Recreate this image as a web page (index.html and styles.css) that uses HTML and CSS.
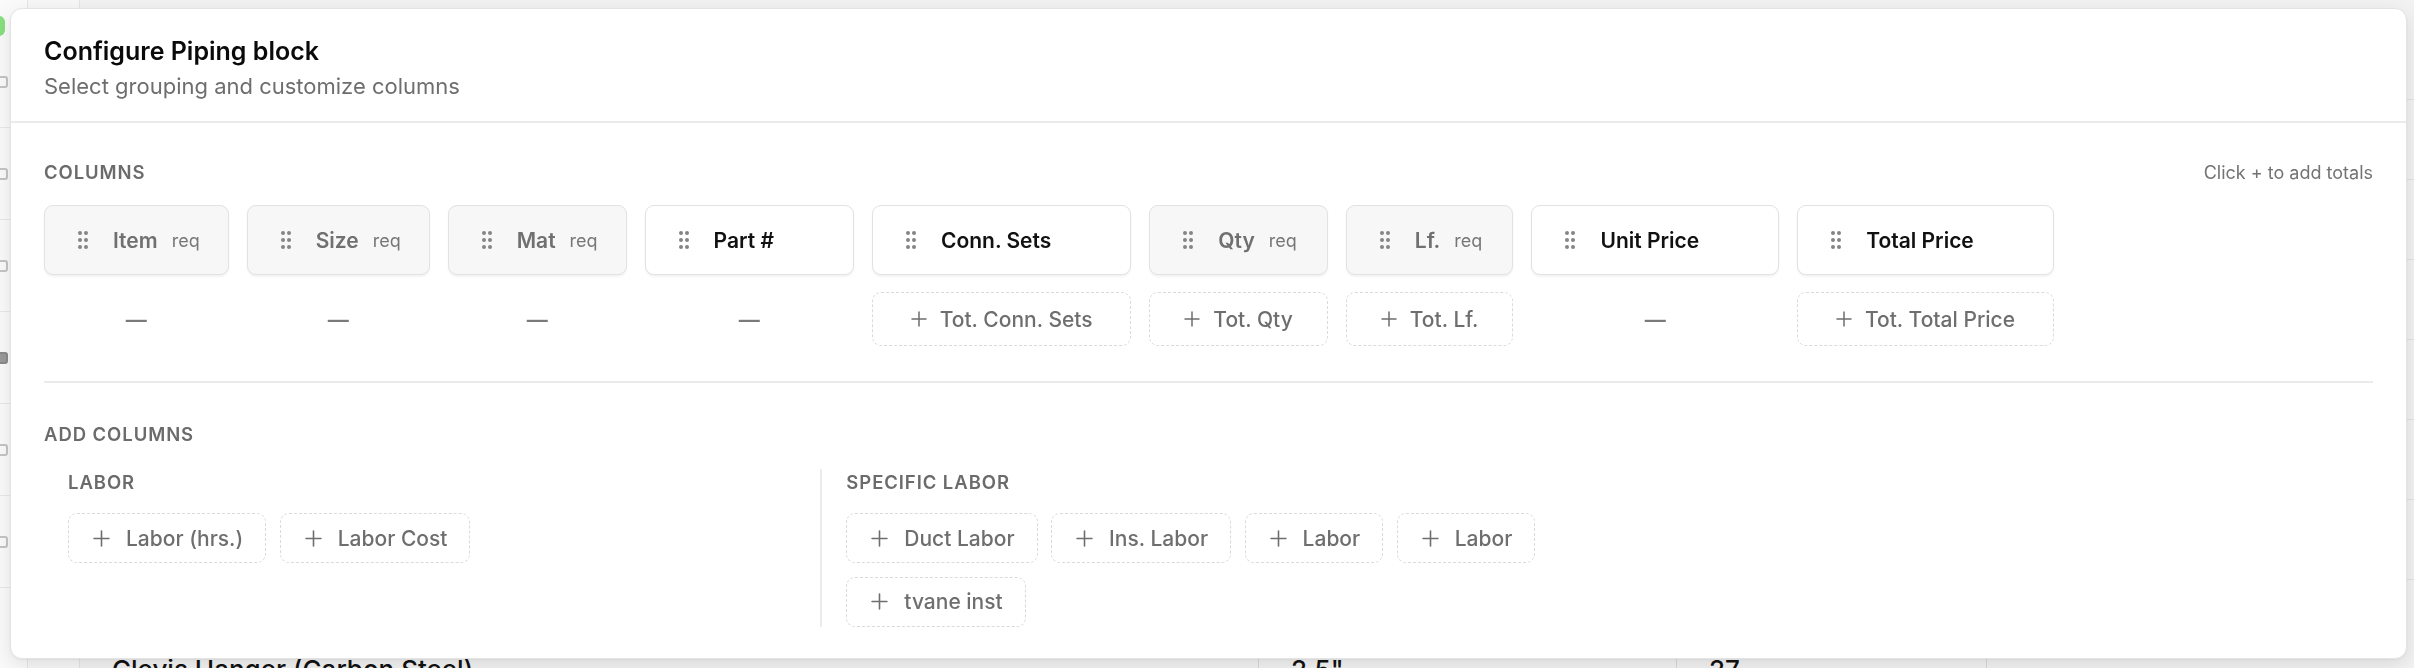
FILE: index.html
```html
<!DOCTYPE html>
<html lang="en">
  <head>
    <meta charset="UTF-8" />
    <meta name="viewport" content="width=device-width, initial-scale=1.0" />
    <title>Configure Piping block</title>
    <link rel="stylesheet" href="styles.css">
  </head>

  <body>
    <svg width="0" height="0" style="position: absolute">
      <symbol id="grip" viewBox="0 0 10 20">
        <circle cx="2" cy="3" r="2" />
        <circle cx="8" cy="3" r="2" />
        <circle cx="2" cy="10" r="2" />
        <circle cx="8" cy="10" r="2" />
        <circle cx="2" cy="17" r="2" />
        <circle cx="8" cy="17" r="2" />
      </symbol>
      <symbol id="plus" viewBox="0 0 16 16">
        <path d="M8 1v14M1 8h14" fill="none" stroke="currentColor" stroke-width="1.5" stroke-linecap="round" />
      </symbol>
    </svg>

    <!-- estimate sheet behind the dialog -->
    <div class="app">
      <aside class="rail">
        <span class="rail-status"></span>
        <div class="rail-item"><span class="rail-icon"></span></div>
        <div class="rail-item"><span class="rail-icon"></span></div>
        <div class="rail-item"><span class="rail-icon"></span></div>
        <div class="rail-item"><span class="rail-icon is-dark"></span></div>
        <div class="rail-item"><span class="rail-icon"></span></div>
        <div class="rail-item"><span class="rail-icon"></span></div>
      </aside>
      <div class="nav"></div>
      <main class="sheet">
        <div class="sheet-row"></div>
        <div class="sheet-row"></div>
        <div class="sheet-row"></div>
        <div class="sheet-row"></div>
        <div class="sheet-row"></div>
        <div class="sheet-row"></div>
        <div class="sheet-row"></div>
        <div class="sheet-row sheet-row-item">
          <span class="cell cell-name">Clevis Hanger (Carbon Steel)</span>
          <span class="cell cell-size">2.5"</span>
          <span class="cell cell-qty">27</span>
          <span class="cell"></span>
        </div>
      </main>
    </div>

    <div class="dialog">
      <header class="dialog-header">
        <h2 class="dialog-title">Configure Piping block</h2>
        <p class="dialog-subtitle">Select grouping and customize columns</p>
      </header>

      <div class="dialog-body">
        <section class="columns">
          <div class="section-head">
            <h3 class="section-label">Columns</h3>
            <span class="section-hint">Click + to add totals</span>
          </div>

          <div class="column-list">
            <div class="column">
              <div class="column-chip is-required">
                <svg class="grip"><use href="#grip" /></svg>
                <span class="column-name">Item</span>
                <span class="column-req">req</span>
              </div>
              <div class="column-total is-empty">&mdash;</div>
            </div>

            <div class="column">
              <div class="column-chip is-required">
                <svg class="grip"><use href="#grip" /></svg>
                <span class="column-name">Size</span>
                <span class="column-req">req</span>
              </div>
              <div class="column-total is-empty">&mdash;</div>
            </div>

            <div class="column">
              <div class="column-chip is-required">
                <svg class="grip"><use href="#grip" /></svg>
                <span class="column-name">Mat</span>
                <span class="column-req">req</span>
              </div>
              <div class="column-total is-empty">&mdash;</div>
            </div>

            <div class="column">
              <div class="column-chip">
                <svg class="grip"><use href="#grip" /></svg>
                <span class="column-name">Part #</span>
                <button class="column-remove" aria-label="Remove column">&times;</button>
              </div>
              <div class="column-total is-empty">&mdash;</div>
            </div>

            <div class="column">
              <div class="column-chip">
                <svg class="grip"><use href="#grip" /></svg>
                <span class="column-name">Conn. Sets</span>
                <button class="column-remove" aria-label="Remove column">&times;</button>
              </div>
              <button class="column-total">
                <svg class="plus"><use href="#plus" /></svg>
                Tot. Conn. Sets
              </button>
            </div>

            <div class="column">
              <div class="column-chip is-required">
                <svg class="grip"><use href="#grip" /></svg>
                <span class="column-name">Qty</span>
                <span class="column-req">req</span>
              </div>
              <button class="column-total">
                <svg class="plus"><use href="#plus" /></svg>
                Tot. Qty
              </button>
            </div>

            <div class="column">
              <div class="column-chip is-required">
                <svg class="grip"><use href="#grip" /></svg>
                <span class="column-name">Lf.</span>
                <span class="column-req">req</span>
              </div>
              <button class="column-total">
                <svg class="plus"><use href="#plus" /></svg>
                Tot. Lf.
              </button>
            </div>

            <div class="column">
              <div class="column-chip">
                <svg class="grip"><use href="#grip" /></svg>
                <span class="column-name">Unit Price</span>
                <button class="column-remove" aria-label="Remove column">&times;</button>
              </div>
              <div class="column-total is-empty">&mdash;</div>
            </div>

            <div class="column">
              <div class="column-chip">
                <svg class="grip"><use href="#grip" /></svg>
                <span class="column-name">Total Price</span>
                <button class="column-remove" aria-label="Remove column">&times;</button>
              </div>
              <button class="column-total">
                <svg class="plus"><use href="#plus" /></svg>
                Tot. Total Price
              </button>
            </div>
          </div>
        </section>

        <section class="add-columns">
          <h3 class="section-label">Add columns</h3>

          <div class="groups">
            <div class="group">
              <h4 class="group-label">Labor</h4>
              <div class="group-chips">
                <button class="add-chip"><svg class="plus"><use href="#plus" /></svg>Labor (hrs.)</button>
                <button class="add-chip"><svg class="plus"><use href="#plus" /></svg>Labor Cost</button>
              </div>
            </div>

            <div class="group">
              <h4 class="group-label">Specific Labor</h4>
              <div class="group-chips">
                <button class="add-chip"><svg class="plus"><use href="#plus" /></svg>Duct Labor</button>
                <button class="add-chip"><svg class="plus"><use href="#plus" /></svg>Ins. Labor</button>
                <button class="add-chip"><svg class="plus"><use href="#plus" /></svg>Labor</button>
                <button class="add-chip"><svg class="plus"><use href="#plus" /></svg>Labor</button>
                <button class="add-chip"><svg class="plus"><use href="#plus" /></svg>tvane inst</button>
              </div>
            </div>
          </div>
        </section>
      </div>
    </div>
  </body>
</html>
```

FILE: styles.css
```css
* {
  box-sizing: border-box;
}

html,
body {
  height: 100%;
  margin: 0;
}

body {
  font-family: Inter, "Noto Sans", sans-serif;
  background: #f5f5f5;
  color: #111;
  overflow: hidden;
}

button {
  font: inherit;
  cursor: pointer;
}

/* sheet in the background */

.app {
  display: flex;
  height: 100%;
}

.rail {
  width: 28px;
  flex-shrink: 0;
  padding-top: 16px;
  background: #fafafa;
  border-right: 1px solid #e6e6e6;
}

.rail-status {
  display: block;
  width: 20px;
  height: 20px;
  margin-left: -15px;
  border-radius: 6px;
  background: #86e07e;
}

.rail-item {
  display: flex;
  align-items: center;
  height: 92px;
  border-bottom: 1px solid #e8e8e8;
}

.rail-icon {
  width: 12px;
  height: 12px;
  margin-left: -4px;
  border: 2px solid #c4c4c4;
  border-radius: 3px;
}

.rail-icon.is-dark {
  border-color: #8a8a8a;
  background: #9a9a9a;
}

.nav {
  width: 52px;
  flex-shrink: 0;
  background: #f7f7f7;
  border-right: 1px solid #e4e4e4;
}

.sheet {
  flex: 1;
  padding-top: 20px;
  background: #f2f2f2;
}

.sheet-row {
  height: 80px;
  border-bottom: 1px solid #e2e2e2;
}

.sheet-row-item {
  display: grid;
  grid-template-columns: 1178px 418px 310px 1fr;
  height: auto;
  border-bottom: 0;
}

.cell {
  padding: 70px 32px 0;
  font-size: 26px;
  font-weight: 500;
  line-height: 40px;
  color: #111;
}

.cell + .cell {
  border-left: 1px solid #d8d8d8;
}

/* dialog */

.dialog {
  position: fixed;
  top: 8px;
  left: 10px;
  right: 7px;
  background: #fff;
  border: 1px solid #e3e3e3;
  border-radius: 12px;
  box-shadow: 0 6px 20px rgba(0, 0, 0, 0.1), 0 1px 3px rgba(0, 0, 0, 0.05);
}

.dialog-header {
  padding: 26px 33px 20px;
  border-bottom: 2px solid #ebebeb;
}

.dialog-title {
  margin: 0;
  font-size: 25px;
  font-weight: 600;
  line-height: 32px;
  color: #0a0a0a;
}

.dialog-subtitle {
  margin: 4px 0 0;
  font-size: 22px;
  line-height: 30px;
  color: #6e6e6e;
}

.dialog-body {
  padding: 36px 33px 31px;
}

.section-head {
  display: flex;
  justify-content: space-between;
  align-items: center;
  margin-bottom: 19px;
}

.section-label,
.group-label {
  margin: 0;
  font-size: 18.5px;
  font-weight: 600;
  line-height: 27px;
  letter-spacing: 0.05em;
  text-transform: uppercase;
  color: #6b6b6b;
}

.section-hint {
  font-size: 18px;
  line-height: 27px;
  color: #737373;
}

/* columns */

.columns {
  padding-bottom: 35px;
  border-bottom: 2px solid #ebebeb;
}

.column-list {
  display: flex;
  align-items: flex-start;
  gap: 18px;
}

.column {
  display: flex;
  flex-direction: column;
  gap: 17px;
}

.column-chip {
  display: flex;
  align-items: center;
  padding: 18.5px 28px 18.5px 33px;
  background: #fff;
  border: 1.5px solid #e2e2e2;
  border-radius: 9px;
  box-shadow: 0 1.5px 2px rgba(0, 0, 0, 0.05);
  font-size: 21px;
  font-weight: 600;
  line-height: 31px;
  color: #111;
}

.column-chip.is-required {
  background: #f7f7f7;
  color: #707070;
}

.grip {
  width: 10px;
  height: 20px;
  margin-right: 25px;
  fill: #858585;
  flex-shrink: 0;
}

.column-req {
  margin-left: 14px;
  font-size: 18px;
  font-weight: 400;
  color: #777;
}

/* remove button only shows on hover, but keeps its room */
.column-remove {
  width: 24px;
  margin-left: auto;
  padding: 0;
  border: 0;
  background: none;
  color: #999;
  opacity: 0;
}

.column-chip .column-name {
  margin-right: 27px;
}

.column-chip.is-required .column-name {
  margin-right: 0;
}

.column-chip:hover .column-remove {
  opacity: 1;
}

.column-total {
  display: flex;
  justify-content: center;
  align-items: center;
  gap: 13px;
  padding: 10.5px 34px;
  background: #fff;
  border: 1.5px dashed #dadada;
  border-radius: 9px;
  font-size: 21px;
  font-weight: 500;
  line-height: 31px;
  color: #6e6e6e;
  white-space: nowrap;
}

.column-total.is-empty {
  border-color: transparent;
  font-weight: 600;
  color: #7a7a7a;
}

.plus {
  width: 16px;
  height: 16px;
  flex-shrink: 0;
}

/* add columns */

.add-columns {
  padding-top: 38px;
}

.add-columns > .section-label {
  margin-bottom: 21px;
}

.groups {
  display: grid;
  grid-template-columns: repeat(3, 1fr);
}

.group {
  padding: 0 24px;
}

.group + .group {
  border-left: 2px solid #ebebeb;
}

.group-label {
  margin-bottom: 17px;
}

.group-chips {
  display: flex;
  flex-wrap: wrap;
  gap: 13.5px;
}

.add-chip {
  display: inline-flex;
  align-items: center;
  gap: 16px;
  padding: 8.5px 22px 8.5px 24px;
  background: #fff;
  border: 1.5px dashed #dadada;
  border-radius: 9px;
  font-size: 21px;
  font-weight: 500;
  line-height: 31px;
  color: #6e6e6e;
}

.add-chip .plus {
  width: 17px;
  height: 17px;
}
```
